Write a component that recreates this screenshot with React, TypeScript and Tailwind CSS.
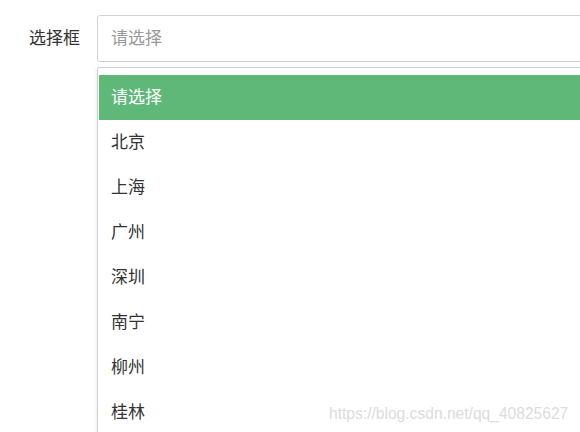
const options = ['请选择', '北京', '上海', '广州', '深圳', '南宁', '柳州', '桂林']

export default function App() {
    return (
        <div
            className="relative h-[432px] w-[580px] overflow-hidden bg-white pt-[15px] text-[17px] text-[#333]"
            style={{ fontFamily: '"Noto Sans CJK SC", "Noto Sans", sans-serif' }}
        >
            <div className="flex">
                <label className="w-[97px] shrink-0 pr-[17px] text-right leading-[43px]">选择框</label>
                <div className="w-[530px] shrink-0">
                    <div className="h-[47px] rounded-[3px] border border-[#d2d2d2] pl-[13px] leading-[41px] text-[#999]">
                        请选择
                    </div>
                    <ul className="mt-[5px] rounded-[2px] border border-[#d2d2d2] pt-[7px] pl-px shadow-[0_2px_4px_rgba(0,0,0,0.12)]">
                        {options.map((option, i) => (
                            <li
                                key={option}
                                className={
                                    i === 0
                                        ? 'h-[45px] bg-[#5fb878] pl-3 leading-[41px] text-white'
                                        : 'h-[45px] pl-3 leading-[41px]'
                                }
                            >
                                {option}
                            </li>
                        ))}
                    </ul>
                </div>
            </div>
            <span
                className="absolute left-[329px] top-[402px] text-[15.6px] text-[#dcdcdc]"
                style={{ fontFamily: '"Liberation Sans", Arial, sans-serif' }}
            >
                https://blog.csdn.net/qq_40825627
            </span>
        </div>
    )
}
